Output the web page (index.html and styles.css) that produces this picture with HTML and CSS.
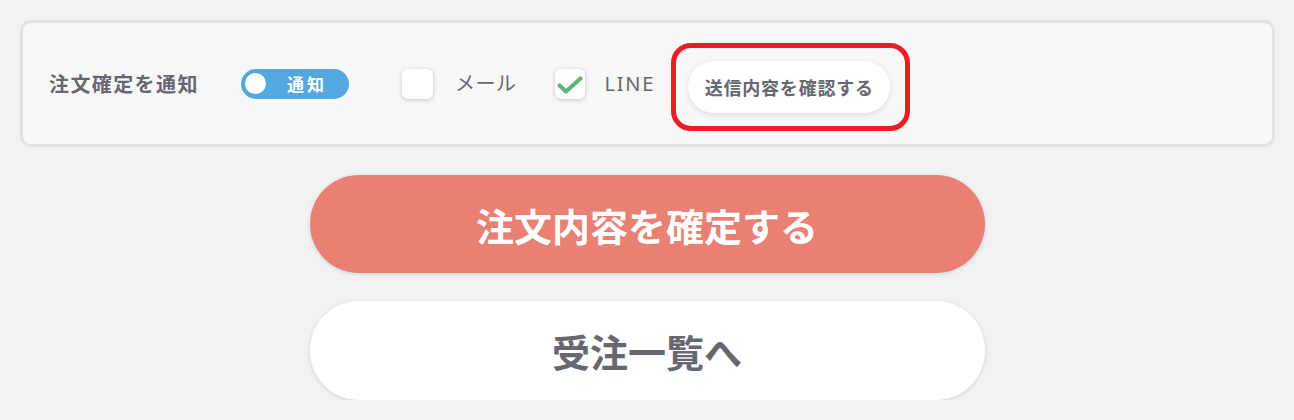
FILE: index.html
```html
<!DOCTYPE html>
<html lang="ja">
<head>
<meta charset="utf-8">
<link rel="stylesheet" href="styles.css">
</head>
<body>
<div class="page">
  <div class="panel">
    <div class="label">注文確定を通知</div>
    <div class="toggle">
      <span class="knob"></span>
      <span class="toggle-text">通知</span>
    </div>
    <div class="check"></div>
    <span class="check-label mail">メール</span>
    <div class="check checked">
      <svg width="30" height="30" viewBox="0 0 30 30"><polyline points="4.5,16.5 11,22.5 25.5,9.5" fill="none" stroke="#5db77a" stroke-width="4.2" stroke-linecap="round" stroke-linejoin="round"/></svg>
    </div>
    <span class="check-label line">LINE</span>
    <div class="highlight">
      <button class="preview">送信内容を確認する</button>
    </div>
  </div>
  <div class="actions">
    <button class="big primary">注文内容を確定する</button>
    <button class="big secondary">受注一覧へ</button>
  </div>
</div>
</body>
</html>
```

FILE: styles.css
```css
html, body {
  margin: 0;
  padding: 0;
  background: #f1f3f3;
  font-family: "Noto Sans", "Noto Sans CJK JP", sans-serif;
  color: #66676f;
}
.page {
  padding: 20px 19px 0 20px;
}
.panel {
  box-sizing: border-box;
  height: 127px;
  border: 3px solid #e2e4df;
  border-radius: 11px;
  background: #f8f8f8;
  display: flex;
  align-items: center;
  padding-left: 26px;
}
.label {
  font-family: "Noto Sans CJK JP", sans-serif;
  font-weight: 700;
  font-size: 20px;
  letter-spacing: 1.4px;
  color: #66676f;
  margin-top: -1px;
  width: 152px;
  white-space: nowrap;
}
.toggle {
  margin-left: 40px;
  width: 108px;
  height: 30px;
  border-radius: 15px;
  background: #53a8e2;
  display: flex;
  align-items: center;
  box-sizing: border-box;
  padding-left: 4px;
}
.knob {
  width: 21px;
  height: 21px;
  border-radius: 50%;
  background: #fff;
}
.toggle-text {
  font-family: "Noto Sans CJK JP", sans-serif;
  font-weight: 700;
  font-size: 17px;
  letter-spacing: 3px;
  color: #fff;
  margin-left: 21px;
  line-height: 1;
}
.check {
  box-sizing: border-box;
  width: 31px;
  height: 30px;
  border-radius: 6px;
  background: #fff;
  box-shadow: 0 1px 4px rgba(60, 60, 80, 0.28);
  margin-left: 53px;
  display: flex;
  align-items: center;
  justify-content: center;
}
.check.checked {
  width: 30px;
  margin-left: 38px;
}
.check svg {
  display: block;
}
.check-label {
  font-family: "Noto Sans", "Noto Sans CJK JP", sans-serif;
  font-size: 20px;
  color: #66676f;
  margin-left: 22px;
  line-height: 1;
  letter-spacing: 0.5px;
}
.check-label.line {
  margin-left: 20px;
  letter-spacing: 1.8px;
}
.highlight {
  margin-left: 16px;
  margin-top: 7px;
  border: 5px solid #ec1c24;
  border-radius: 20px;
  padding: 13px 15px 13px 12px;
}
.preview {
  display: block;
  width: 202px;
  height: 52px;
  border: none;
  border-radius: 26px;
  background: #fff;
  box-shadow: 0 2px 6px rgba(60, 60, 80, 0.15);
  font-family: "Noto Sans CJK JP", sans-serif;
  font-weight: 700;
  font-size: 18px;
  letter-spacing: 0.8px;
  color: #66676f;
  padding: 0;
}
.actions {
  display: flex;
  flex-direction: column;
  align-items: center;
  gap: 28px;
  margin-top: 28px;
  margin-left: -20px;
  margin-right: -19px;
}
.big {
  width: 675px;
  height: 98px;
  border: none;
  border-radius: 49px;
  font-family: "Noto Sans CJK JP", sans-serif;
  font-weight: 700;
  font-size: 38px;
  letter-spacing: 0;
  padding: 0;
  box-shadow: 0 1px 4px rgba(60, 60, 80, 0.18);
}
.primary {
  background: #e88073;
  color: #fff;
}
.secondary {
  height: 99px;
  background: #fff;
  color: #66676f;
}
```
